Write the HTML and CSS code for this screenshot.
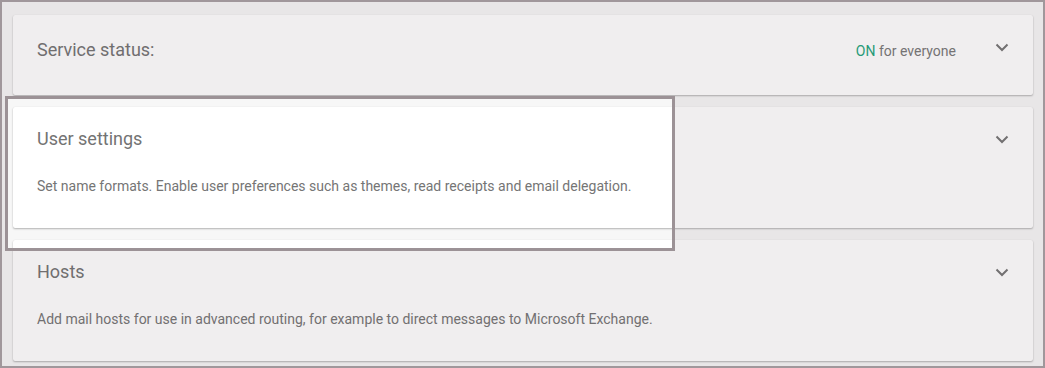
FILE: index.html
```html
<!DOCTYPE html>
<html lang="en">
<head>
<meta charset="utf-8">
<title>Settings</title>
<link rel="stylesheet" href="styles.css">
</head>
<body>
<div class="page">
  <section class="card card-status">
    <div class="head">
      <h2 class="title">Service status:</h2>
      <span class="status"><span class="on">ON</span> for everyone</span>
      <span class="chev"><svg width="14" height="9" viewBox="0 0 14 9"><path d="M1.5 1.5 L7 7 L12.5 1.5" fill="none" stroke="#757575" stroke-width="2"/></svg></span>
    </div>
  </section>
  <section class="card">
    <div class="head">
      <h2 class="title">User settings</h2>
      <span class="chev"><svg width="14" height="9" viewBox="0 0 14 9"><path d="M1.5 1.5 L7 7 L12.5 1.5" fill="none" stroke="#757575" stroke-width="2"/></svg></span>
    </div>
    <p class="desc">Set name formats. Enable user preferences such as themes, read receipts and email delegation.</p>
  </section>
  <section class="card">
    <div class="head">
      <h2 class="title">Hosts</h2>
      <span class="chev"><svg width="14" height="9" viewBox="0 0 14 9"><path d="M1.5 1.5 L7 7 L12.5 1.5" fill="none" stroke="#757575" stroke-width="2"/></svg></span>
    </div>
    <p class="desc">Add mail hosts for use in advanced routing, for example to direct messages to Microsoft Exchange.</p>
  </section>
  <div class="spotlight"></div>
</div>
</body>
</html>
```
FILE: styles.css
```css
* { box-sizing: border-box; }
html, body { margin: 0; padding: 0; }
body {
  width: 1045px;
  height: 368px;
  border: 2px solid #a0979b;
  background: #f7f7f7;
  font-family: Roboto, "Noto Sans", sans-serif;
  overflow: hidden;
}
.page {
  position: relative;
  height: 100%;
  overflow: hidden;
  padding: 13px 10px 0 11px;
  display: flex;
  flex-direction: column;
  gap: 12px;
}
.card {
  background: #ffffff;
  border-radius: 2px;
  box-shadow: 0 1px 2px rgba(0,0,0,0.28), 0 0 1px rgba(0,0,0,0.08);
  padding: 20px 24px 32px 24px;
}
.card-status { padding: 19px 24px 37px 24px; }
.head {
  display: flex;
  align-items: flex-start;
  height: 24px;
}
.title {
  flex: 1;
  margin: 0;
  font-size: 18px;
  font-weight: 400;
  line-height: 24px;
  color: #737373;
}
.card-status .title { padding-top: 4px; }
.status {
  font-size: 14px;
  line-height: 24px;
  padding-top: 5px;
  color: #787878;
  margin-right: 34px;
}
.on { color: #22a47c; }
.chev {
  width: 24px;
  height: 24px;
  display: flex;
  align-items: center;
  justify-content: center;
  margin-right: -5px;
  padding-top: 1px;
}
.card-status .chev { padding-top: 2px; }
.desc {
  margin: 25px 0 0 0;
  font-size: 14px;
  line-height: 20px;
  color: #757575;
}
.spotlight {
  position: absolute;
  left: 3px;
  top: 94px;
  width: 670px;
  height: 155px;
  border: 3px solid #9c9296;
  box-shadow: 0 0 0 3000px rgba(85, 72, 78, 0.09);
  pointer-events: none;
}
```
